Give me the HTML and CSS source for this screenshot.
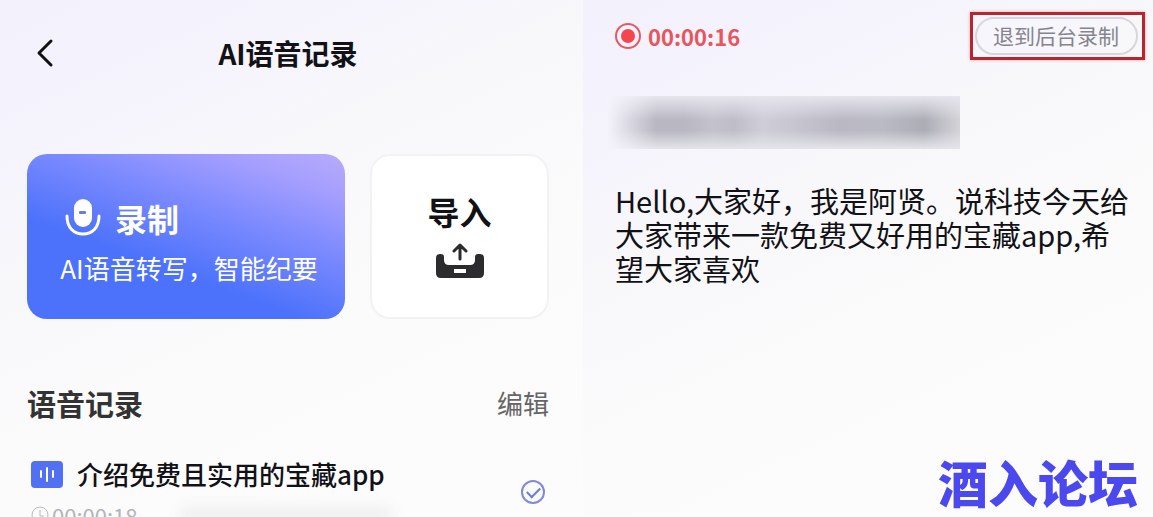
FILE: index.html
```html
<!DOCTYPE html>
<html lang="zh-CN">
<head>
  <meta charset="UTF-8">
  <meta name="viewport" content="width=device-width, initial-scale=1.0">
  <title>AI语音记录</title>
  <link rel="stylesheet" href="styles.css">
</head>
<body>
  <main class="page">
    <section class="panel home">
      <header class="topbar">
        <button class="back" type="button" aria-label="返回">
          <svg width="36" height="36" viewBox="0 0 36 36">
            <path d="M24 6 L12 18 L24 30" fill="none" stroke="#111" stroke-width="3" stroke-linecap="round" stroke-linejoin="round"/>
          </svg>
        </button>
        <h1 class="title">AI语音记录</h1>
      </header>

      <div class="cards">
        <button class="card record" type="button">
          <span class="record-head">
            <svg width="36" height="40" viewBox="0 0 36 40">
              <rect x="9" y="1" width="18" height="28" rx="9" fill="#fff"/>
              <rect x="14" y="13" width="7" height="3" rx="1" fill="#6b7dde"/>
              <path d="M2 18 C2 30 9 36 18 36 S34 30 34 18" fill="none" stroke="#fff" stroke-width="3" stroke-linecap="round"/>
            </svg>
            <strong class="card-title">录制</strong>
          </span>
          <span class="record-desc">AI语音转写，智能纪要</span>
        </button>
        <button class="card import" type="button">
          <strong class="card-title">导入</strong>
          <svg width="48" height="36" viewBox="0 0 48 36">
            <path d="M0 15 Q0 11 4 11 H5 Q8 11 8 14 V17 Q8 22 13 22 H34 Q39 22 39 17 V14 Q39 11 42 11 H44 Q48 11 48 15 V30 Q48 35 43 35 H5 Q0 35 0 30 Z M18 26 V30 H30 V26 Z" fill="#2c2c2e" fill-rule="evenodd"/>
            <path d="M24 16 V2 M18 8 L24 2 L30 8" fill="none" stroke="#2c2c2e" stroke-width="3" stroke-linecap="round" stroke-linejoin="round"/>
          </svg>
        </button>
      </div>

      <div class="list-head">
        <h2 class="list-title">语音记录</h2>
        <button class="edit" type="button">编辑</button>
      </div>

      <article class="item">
        <div class="item-info">
          <label class="item-name" for="rec-1">
            <svg width="32" height="27" viewBox="0 0 32 27">
              <rect width="32" height="27" rx="4" fill="#5270f2"/>
              <path d="M10 10 V16 M16 7 V20 M22 10 V16" fill="none" stroke="#fff" stroke-width="2" stroke-linecap="round"/>
            </svg>
            介绍免费且实用的宝藏app
          </label>
          <div class="item-time">
            <svg width="18" height="18" viewBox="0 0 18 18">
              <circle cx="9" cy="9" r="8" fill="none" stroke="#bbb" stroke-width="1"/>
              <path d="M9 4 V10 H13" fill="none" stroke="#bbb" stroke-width="1"/>
            </svg>
            <time>00:00:18</time>
            <span class="smudge"></span>
          </div>
        </div>
        <input class="check" id="rec-1" type="checkbox" checked>
      </article>
    </section>

    <section class="panel recording">
      <header class="rec-bar">
        <div class="timer">
          <svg width="26" height="26" viewBox="0 0 26 26">
            <circle cx="13" cy="13" r="12" fill="none" stroke="#e8585e" stroke-width="2"/>
            <circle cx="13" cy="13" r="7" fill="#f2474c"/>
          </svg>
          <time>00:00:16</time>
        </div>
        <div class="highlight">
          <button class="background-btn" type="button">退到后台录制</button>
        </div>
      </header>
      <div class="redacted"></div>
      <p class="transcript">Hello,大家好，我是阿贤。说科技今天给大家带来一款免费又好用的宝藏app,希望大家喜欢</p>
    </section>

    <div class="watermark">酒入论坛</div>
  </main>
</body>
</html>
```

FILE: styles.css
```css
* {
  box-sizing: border-box;
}
body {
  margin: 0;
  color: #111116;
  font-family: "Noto Sans CJK SC", sans-serif;
}
h1, h2, p {
  margin: 0;
}
button {
  padding: 0;
  border: 0;
  background: none;
  color: inherit;
  font-family: inherit;
  cursor: pointer;
}
svg {
  display: block;
  flex: none;
}

.page {
  position: relative;
  display: grid;
  grid-template-columns: 583fr 570fr;
  height: 100vh;
  overflow: hidden;
}
.panel {
  min-width: 0;
  background: linear-gradient(155deg, #f2f1fc 0%, #f5f4fd 20%, #f8f8fa 38%, #fbfbfc 60%, #fcfcfc 100%);
}

/* 首页 */
.home {
  padding: 31px 34px 0 27px;
}
.topbar {
  display: grid;
  grid-template-columns: 36px 1fr 36px;
  align-items: center;
  height: 44px;
}
.title {
  font-size: 28px;
  line-height: 44px;
  text-align: center;
}

.cards {
  display: grid;
  grid-template-columns: 318fr 179fr;
  gap: 25px;
  margin-top: 79px;
}
.card {
  display: flex;
  flex-direction: column;
  height: 165px;
  border-radius: 20px;
}
.card-title {
  font-size: 32px;
  line-height: 40px;
}
.record {
  gap: 12px;
  padding: 44px 26px 0 32px;
  background: linear-gradient(20deg, #4c72fb 0%, #4c72fb 36%, #7a89fe 62%, #a49efe 84%, #b7abfb 100%);
  color: #fff;
}
.record-head {
  display: flex;
  align-items: center;
  gap: 14px;
  padding-left: 6px;
}
.record-desc {
  font-size: 26px;
  line-height: 36px;
  white-space: nowrap;
}
.import {
  align-items: center;
  gap: 12px;
  padding-top: 35px;
  border: 2px solid #f2f2f4;
  background: #fff;
}

.list-head {
  display: flex;
  align-items: center;
  justify-content: space-between;
  margin-top: 63px;
}
.list-title {
  color: #333;
  font-size: 29px;
  line-height: 42px;
}
.edit {
  color: #666;
  font-size: 26px;
  line-height: 42px;
}

.item {
  display: flex;
  justify-content: space-between;
  margin-top: 31px;
  padding: 0 4px;
}
.item-name {
  display: flex;
  align-items: center;
  gap: 14px;
  font-size: 26px;
  font-weight: 500;
  line-height: 38px;
}
.item-time {
  display: flex;
  align-items: center;
  gap: 3px;
  margin-top: 8px;
  color: #b4b4b6;
  font-size: 22px;
  line-height: 28px;
}
.smudge {
  width: 210px;
  height: 16px;
  margin-left: 40px;
  background: #f0f0f1;
  filter: blur(6px);
}
.check {
  display: grid;
  place-items: center;
  width: 24px;
  height: 24px;
  margin: 25px 0 0;
  border: 2px solid #8289d6;
  border-radius: 50%;
  appearance: none;
}
.check:checked::after {
  width: 11px;
  height: 6px;
  border: solid #6f7bd0;
  border-width: 0 0 2px 2px;
  content: "";
  transform: translateY(-1px) rotate(-45deg);
}

/* 录制页 */
.recording {
  padding: 12px 8px 0 24px;
}
.rec-bar {
  display: flex;
  align-items: center;
  justify-content: space-between;
  padding-left: 8px;
}
.timer {
  display: flex;
  align-items: center;
  gap: 7px;
  color: #e8555c;
  font-size: 22px;
  font-weight: 700;
  line-height: 32px;
}
.highlight {
  padding: 2px 4px 2px 2px;
  border: 3px solid #b5262e;
  box-shadow: 0 0 3px #e0a0a8;
}
.background-btn {
  height: 38px;
  padding: 0 17px 2px 16px;
  border: 2px solid #d6d6de;
  border-radius: 19px;
  color: #858590;
  font-size: 21px;
  line-height: 32px;
}
/* 打码的标题 */
.redacted {
  width: 353px;
  height: 53px;
  margin-top: 36px;
  background:
    linear-gradient(90deg, #f5f4fd 0%, transparent 14%),
    linear-gradient(180deg, #e6e5ee 0%, transparent 45%, transparent 65%, #e4e4ea 100%),
    linear-gradient(90deg, #b9b8c2 0%, #b9b8c2 22%, #c4c3cd 30%, #bfbec8 36%, #cfced8 44%, #c8c7d1 52%, #b9b8c3 66%, #babac4 78%, #adadb6 90%, #d4d4d8 100%);
}
.transcript {
  margin-top: 34px;
  padding: 0 8px;
  font-size: 29px;
  line-height: 34px;
}

.watermark {
  position: absolute;
  right: 15px;
  bottom: 0;
  color: #4b49ee;
  font-size: 50px;
  font-weight: 900;
  line-height: 72px;
}
```
